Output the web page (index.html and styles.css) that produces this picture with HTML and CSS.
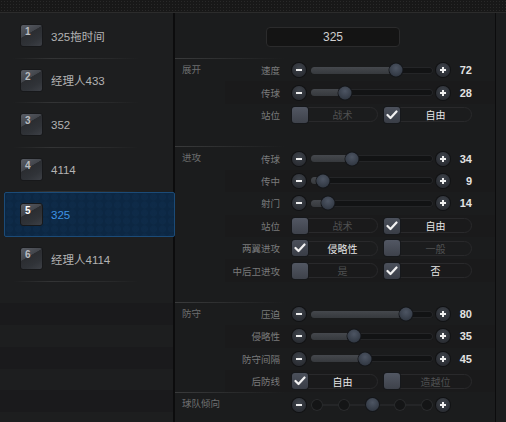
FILE: index.html
```html
<!DOCTYPE html>
<html>
<head>
<meta charset="utf-8">
<link rel="stylesheet" href="styles.css">
</head>
<body>
<div class="top"></div>
<div class="main">
  <div class="left">
    <div class="item"><div class="badge">1</div><span class="name">325拖时间</span></div>
    <div class="item"><div class="badge">2</div><span class="name">经理人433</span></div>
    <div class="item"><div class="badge">3</div><span class="name">352</span></div>
    <div class="item"><div class="badge">4</div><span class="name">4114</span></div>
    <div class="item sel"><div class="badge">5</div><span class="name">325</span></div>
    <div class="item"><div class="badge">6</div><span class="name">经理人4114</span></div>
    <div class="filler"></div>
  </div>
  <div class="right">
    <div class="head"><div class="title">325</div></div>

    <div class="sec">
      <div class="sec-label">展开</div>
      <div class="rows">
        <div class="row"><div class="lab">速度</div><div class="btn"></div><div class="track" style="--v:70"><div class="fill"></div><div class="knob"></div></div><div class="btn plus"></div><div class="val">72</div></div>
        <div class="row"><div class="lab">传球</div><div class="btn"></div><div class="track" style="--v:28"><div class="fill"></div><div class="knob"></div></div><div class="btn plus"></div><div class="val">28</div></div>
        <div class="row"><div class="lab">站位</div>
          <div class="opt"><div class="box"></div><span class="otext">战术</span></div>
          <div class="opt wide on"><div class="box"><svg width="12" height="10" viewBox="0 0 12 10"><path d="M1.5 5 L4.5 8 L10.5 1.5" fill="none" stroke="#f2f2f2" stroke-width="2.2" stroke-linecap="round" stroke-linejoin="round"/></svg></div><span class="otext">自由</span></div>
        </div>
        <div class="sp"></div>
      </div>
    </div>

    <div class="sec">
      <div class="sec-label">进攻</div>
      <div class="rows">
        <div class="row"><div class="lab">传球</div><div class="btn"></div><div class="track" style="--v:34"><div class="fill"></div><div class="knob"></div></div><div class="btn plus"></div><div class="val">34</div></div>
        <div class="row"><div class="lab">传中</div><div class="btn"></div><div class="track" style="--v:10"><div class="fill"></div><div class="knob"></div></div><div class="btn plus"></div><div class="val">9</div></div>
        <div class="row"><div class="lab">射门</div><div class="btn"></div><div class="track" style="--v:14"><div class="fill"></div><div class="knob"></div></div><div class="btn plus"></div><div class="val">14</div></div>
        <div class="row"><div class="lab">站位</div>
          <div class="opt"><div class="box"></div><span class="otext">战术</span></div>
          <div class="opt wide on"><div class="box"><svg width="12" height="10" viewBox="0 0 12 10"><path d="M1.5 5 L4.5 8 L10.5 1.5" fill="none" stroke="#f2f2f2" stroke-width="2.2" stroke-linecap="round" stroke-linejoin="round"/></svg></div><span class="otext">自由</span></div>
        </div>
        <div class="row"><div class="lab">两翼进攻</div>
          <div class="opt on"><div class="box"><svg width="12" height="10" viewBox="0 0 12 10"><path d="M1.5 5 L4.5 8 L10.5 1.5" fill="none" stroke="#f2f2f2" stroke-width="2.2" stroke-linecap="round" stroke-linejoin="round"/></svg></div><span class="otext">侵略性</span></div>
          <div class="opt wide"><div class="box"></div><span class="otext">一般</span></div>
        </div>
        <div class="row"><div class="lab">中后卫进攻</div>
          <div class="opt"><div class="box"></div><span class="otext">是</span></div>
          <div class="opt wide on"><div class="box"><svg width="12" height="10" viewBox="0 0 12 10"><path d="M1.5 5 L4.5 8 L10.5 1.5" fill="none" stroke="#f2f2f2" stroke-width="2.2" stroke-linecap="round" stroke-linejoin="round"/></svg></div><span class="otext">否</span></div>
        </div>
        <div class="sp"></div>
      </div>
    </div>

    <div class="sec">
      <div class="sec-label">防守</div>
      <div class="rows">
        <div class="row"><div class="lab">压迫</div><div class="btn"></div><div class="track" style="--v:78"><div class="fill"></div><div class="knob"></div></div><div class="btn plus"></div><div class="val">80</div></div>
        <div class="row"><div class="lab">侵略性</div><div class="btn"></div><div class="track" style="--v:35"><div class="fill"></div><div class="knob"></div></div><div class="btn plus"></div><div class="val">35</div></div>
        <div class="row"><div class="lab">防守间隔</div><div class="btn"></div><div class="track" style="--v:44"><div class="fill"></div><div class="knob"></div></div><div class="btn plus"></div><div class="val">45</div></div>
        <div class="row"><div class="lab">后防线</div>
          <div class="opt on"><div class="box"><svg width="12" height="10" viewBox="0 0 12 10"><path d="M1.5 5 L4.5 8 L10.5 1.5" fill="none" stroke="#f2f2f2" stroke-width="2.2" stroke-linecap="round" stroke-linejoin="round"/></svg></div><span class="otext">自由</span></div>
          <div class="opt wide"><div class="box"></div><span class="otext">造越位</span></div>
        </div>
      </div>
    </div>

    <div class="sec">
      <div class="sec-label">球队倾向</div>
      <div class="rows">
        <div class="row"><div class="lab"></div><div class="btn"></div>
          <div class="steps"><span class="dot"></span><span class="dot"></span><span class="dot cur"></span><span class="dot"></span><span class="dot"></span></div>
          <div class="btn plus"></div>
        </div>
      </div>
    </div>
  </div>
  <div class="edge"></div>
</div>
</body>
</html>
```

FILE: styles.css
```css
* { box-sizing: border-box; }

body {
  margin: 0;
  width: 506px;
  height: 422px;
  overflow: hidden;
  background: #1b1c1d;
  font-family: "Liberation Sans", "Noto Sans CJK SC", sans-serif;
}

.top {
  height: 13px;
  background-color: #181818;
  background-image: radial-gradient(#292929 0.8px, transparent 1px);
  background-size: 3px 3px;
  border-bottom: 1px solid #2c2c2c;
}

.main {
  display: flex;
  height: 409px;
}

/* ---------- left list ---------- */
.left {
  width: 175px;
  flex: none;
  background: #1d1e1f;
  border-right: 2px solid #0c0c0d;
  padding-top: 1px;
  display: flex;
  flex-direction: column;
}

.item {
  height: 44.6px;
  flex: none;
  display: flex;
  align-items: center;
  gap: 8px;
  padding-left: 20px;
  border-bottom: 1px solid;
  border-image: linear-gradient(to right, rgba(0,0,0,0) 8%, #333435 30%, #272829 65%, rgba(0,0,0,0) 80%) 1;
}

.badge {
  width: 23px;
  height: 23px;
  flex: none;
  border-radius: 3px;
  border: 1px solid #17181a;
  background: linear-gradient(150deg, #595d65 0%, #43464c 38%, #2b2d31 40%, #303338 70%, #3d4046 100%);
  padding: 1px 0 0 4px;
  font-size: 10px;
  font-weight: bold;
  color: #b9bcc0;
  line-height: 12px;
}

.name {
  font-size: 11.5px;
  color: #b3b3b3;
  white-space: nowrap;
}

.item.sel {
  margin: 0 -2px 0 4px;
  padding-left: 15px;
  border: 1px solid #1b4b78;
  border-image: none;
  border-radius: 2px;
  background-color: #0c2743;
  background-image: radial-gradient(circle, rgba(40,90,140,0.07) 3px, transparent 4px);
  background-size: 9px 8px;
}

.item.sel .badge { color: #ffffff; }
.item.sel .name { color: #3e93e4; }

.filler {
  flex: 1;
  background: repeating-linear-gradient(to bottom, #1d1e1f 0 21.5px, #1a1a1c 21.5px 43.5px);
}

/* ---------- right panel ---------- */
.right {
  width: 320px;
  flex: none;
  display: flex;
  flex-direction: column;
}

.head {
  height: 45px;
  flex: none;
  display: flex;
  justify-content: center;
  padding-top: 14px;
  padding-right: 4px;
}

.title {
  width: 134px;
  height: 20px;
  border-radius: 4px;
  background: #141414;
  border: 1px solid #2b2b2c;
  color: #cfcfcf;
  font-size: 12px;
  display: flex;
  align-items: center;
  justify-content: center;
}

.sec {
  display: flex;
  flex: none;
  border-top: 1px solid;
  border-image: linear-gradient(to right, #3a3b3c, #2c2d2e 50px, rgba(0,0,0,0) 110px) 1;
}

.sec-label {
  width: 50px;
  flex: none;
  padding-left: 7px;
  font-size: 9.5px;
  color: #6d6e6f;
  line-height: 22.4px;
  white-space: nowrap;
}

.rows {
  flex: 1;
  display: flex;
  flex-direction: column;
}

.row {
  height: 22.4px;
  flex: none;
  display: flex;
  align-items: center;
}

.row:nth-child(even) { background: #1a1a1b; }

.sp { height: 20.2px; flex: none; }

.lab {
  width: 55px;
  flex: none;
  margin-right: 12px;
  display: flex;
  justify-content: flex-end;
  white-space: nowrap;
  font-size: 9.5px;
  color: #7a7b7c;
}

.btn {
  width: 14px;
  height: 14px;
  flex: none;
  border-radius: 50%;
  position: relative;
  background: radial-gradient(circle at 50% 35%, #3f444c 0%, #2b2e34 70%);
  box-shadow: 0 0 0 1px #111214;
}

.btn::before {
  content: "";
  position: absolute;
  left: 4px;
  top: 6px;
  width: 6px;
  height: 2px;
  background: #f0f0f0;
}

.btn.plus::after {
  content: "";
  position: absolute;
  left: 6px;
  top: 4px;
  width: 2px;
  height: 6px;
  background: #f0f0f0;
}

.track {
  width: 122px;
  height: 7px;
  flex: none;
  margin: 0 3px 0 5px;
  position: relative;
  border-radius: 4px;
  background: #121314;
  box-shadow: inset 0 0 0 1px #242527;
}

.fill {
  position: absolute;
  left: 0;
  top: 0;
  bottom: 0;
  width: calc(var(--v) * 1%);
  border-radius: 4px;
  background: linear-gradient(#45484d, #36393d);
}

.knob {
  position: absolute;
  top: 50%;
  left: calc(var(--v) * 1%);
  width: 13px;
  height: 13px;
  transform: translate(-50%, -50%);
  border-radius: 50%;
  background: radial-gradient(circle at 50% 35%, #4d5563 0%, #323944 75%);
  box-shadow: 0 0 0 1px #14161a;
}

.val {
  width: 22px;
  flex: none;
  text-align: right;
  font-size: 11px;
  font-weight: bold;
  color: #e2e2e2;
}

.opt {
  width: 86px;
  height: 15px;
  flex: none;
  display: flex;
  align-items: center;
  border: 1px solid #29292b;
  border-radius: 8px;
}

.opt.wide {
  width: 88px;
  margin-left: 6px;
}

.box {
  width: 16px;
  height: 16px;
  flex: none;
  margin-left: -1px;
  border-radius: 3px;
  background: linear-gradient(#525763, #3e424b);
  box-shadow: 0 0 0 1px #16181b;
  display: flex;
  align-items: center;
  justify-content: center;
}

.opt.on .box { background: linear-gradient(#4b505b, #393d46); }

.otext {
  flex: 1;
  text-align: center;
  font-size: 10px;
  color: #4f5051;
  white-space: nowrap;
}

.opt.on .otext { color: #e6e6e6; }

.steps {
  width: 122px;
  height: 12px;
  flex: none;
  margin: 0 3px 0 5px;
  display: flex;
  justify-content: space-between;
  align-items: center;
  background: linear-gradient(#242527, #242527) center / 100% 2px no-repeat;
}

.dot {
  width: 12px;
  height: 12px;
  border-radius: 50%;
  background: #141516;
  box-shadow: inset 0 0 0 1px #2a2b2d;
}

.dot.cur {
  width: 13px;
  height: 13px;
  background: radial-gradient(circle at 50% 35%, #4d5563 0%, #323944 75%);
  box-shadow: 0 0 0 1px #14161a;
}

.edge {
  flex: 1;
  border-left: 1px solid #0c0c0d;
  background: #1c1d1e;
}
```
